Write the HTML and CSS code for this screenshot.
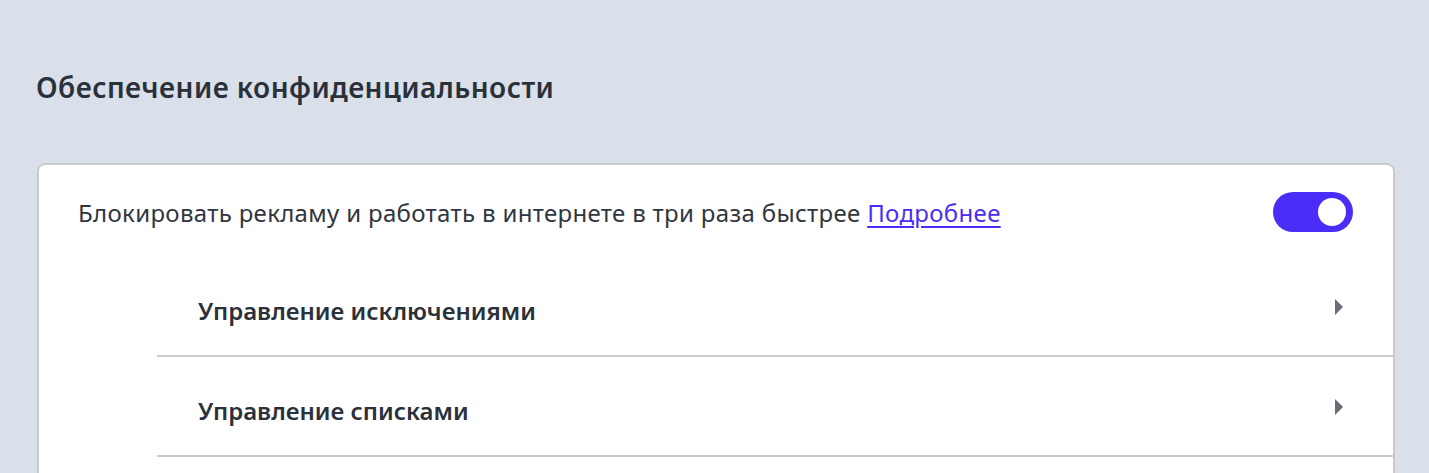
FILE: index.html
```html
<!DOCTYPE html>
<html lang="ru">
<head>
<meta charset="utf-8">
<link rel="stylesheet" href="styles.css">
</head>
<body>
<main class="page">
  <h2 class="section-title">Обеспечение конфиденциальности</h2>
  <section class="card">
    <div class="main-row">
      <span class="main-text">Блокировать рекламу и работать в интернете в три раза быстрее <a href="#" class="link">Подробнее</a></span>
      <span class="toggle"><span class="knob"></span></span>
    </div>
    <div class="sub-row">
      <span class="sub-text">Управление исключениями</span>
      <svg class="arrow" width="8" height="16" viewBox="0 0 8 16"><path d="M0 0 L8 8 L0 16 Z" fill="#6b6b7a"/></svg>
    </div>
    <div class="sub-row">
      <span class="sub-text">Управление списками</span>
      <svg class="arrow" width="8" height="16" viewBox="0 0 8 16"><path d="M0 0 L8 8 L0 16 Z" fill="#6b6b7a"/></svg>
    </div>
  </section>
</main>
</body>
</html>
```
FILE: styles.css
```css
html, body {
  margin: 0;
  padding: 0;
  background: #d9e0ea;
  font-family: "Noto Sans", "Open Sans", sans-serif;
  color: #2b313a;
  overflow: hidden;
}
.page {
  padding: 0 34px 0 36px;
  height: 473px;
  box-sizing: border-box;
}
.section-title {
  margin: 0 0 57px 0;
  padding-top: 68px;
  font-size: 28px;
  font-weight: 600;
  letter-spacing: 0.45px;
  color: #2b313a;
  line-height: 38px;
}
.card {
  background: #fff;
  border: 2px solid #c9cacd;
  border-bottom: none;
  border-radius: 8px 8px 0 0;
  height: 310px;
  box-sizing: border-box;
  margin-left: 1px;
  width: 1358px;
}
.main-row {
  display: flex;
  align-items: flex-start;
  justify-content: space-between;
  padding: 27px 40px 0 39px;
  height: 92px;
  box-sizing: border-box;
}
.main-text {
  font-size: 24px;
  letter-spacing: 0.33px;
  line-height: 40px;
  margin-top: 1px;
  color: #30363f;
}
.link {
  color: #4a2ef7;
  text-decoration: underline;
  text-underline-offset: 4px;
  text-decoration-thickness: 1.5px;
}
.toggle {
  width: 80px;
  height: 40px;
  border-radius: 20px;
  background: #4a2ef7;
  display: flex;
  align-items: center;
  justify-content: flex-end;
  padding-right: 7px;
  box-sizing: border-box;
  flex-shrink: 0;
}
.knob {
  width: 28px;
  height: 28px;
  border-radius: 50%;
  background: #fff;
}
.sub-row {
  margin-left: 118px;
  height: 100px;
  border-bottom: 2px solid #cbcbcd;
  box-sizing: border-box;
  display: flex;
  align-items: center;
  justify-content: space-between;
  padding: 8px 50px 0 41px;
}
.sub-text {
  font-size: 24px;
  font-weight: 600;
  color: #2b313a;
}
.arrow {
  display: block;
  margin-bottom: 7px;
}
```
